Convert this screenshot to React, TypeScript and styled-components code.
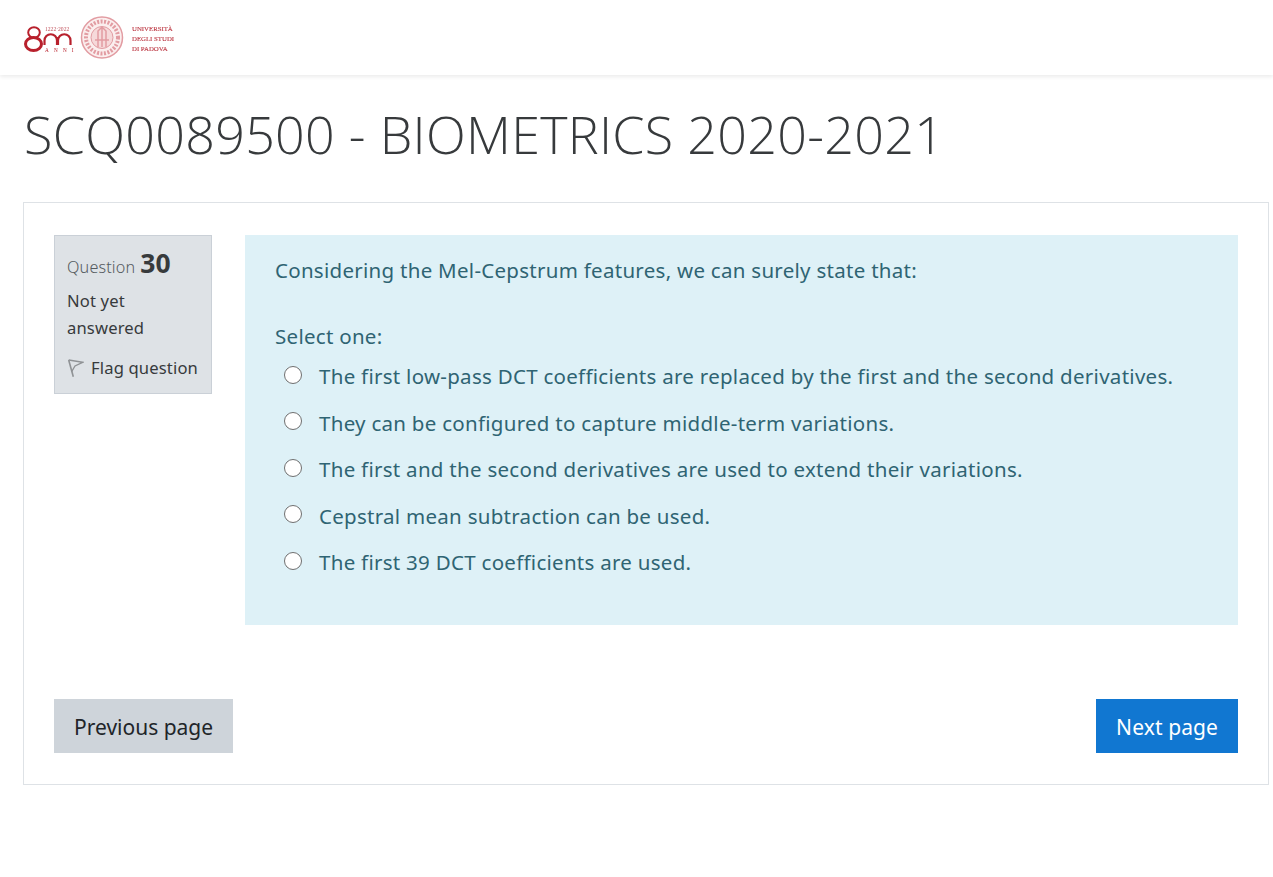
import styled, { createGlobalStyle } from 'styled-components';

const GlobalStyle = createGlobalStyle`
  html, body {
    margin: 0;
    padding: 0;
    background: #fff;
    font-family: 'Noto Sans', 'Open Sans', sans-serif;
    color: #373a3c;
  }
`;

const Header = styled.header`
  height: 75px;
  display: flex;
  align-items: center;
  padding-left: 23px;
  background: #fff;
  box-shadow: 0 2px 4px rgba(0, 0, 0, 0.08);
`;

const LogoSvg = styled.svg`
  filter: blur(0.4px);
`;

const Title = styled.h1`
  margin: 0;
  padding: 24px 0 0 24px;
  height: 103px;
  box-sizing: content-box;
  font-family: 'Open Sans', sans-serif;
  font-weight: 300;
  font-size: 52px;
  letter-spacing: 0.29px;
  line-height: 70px;
  color: #373a3c;
  white-space: nowrap;
`;

const Card = styled.main`
  margin-left: 23px;
  width: 1246px;
  height: 583px;
  box-sizing: border-box;
  border: 1px solid #dee2e6;
  padding: 32px 30px 31px 30px;
  display: flex;
  flex-direction: column;
  justify-content: space-between;
`;

const QuestionRow = styled.div`
  display: flex;
  align-items: flex-start;
  gap: 33px;
`;

const InfoBox = styled.aside`
  width: 158px;
  height: 159px;
  flex: none;
  box-sizing: border-box;
  padding: 12px 12px 0 12px;
  background: #dee2e6;
  border: 1px solid #cad0d7;
  font-size: 16.6px;
  letter-spacing: 0.15px;
  color: #373a3c;
`;

const QuestionNo = styled.div`
  display: flex;
  align-items: baseline;
  gap: 5px;
  height: 39px;
  font-weight: 300;
  color: #555b60;
  font-size: 16.2px;
  line-height: 30px;
`;

const Num = styled.b`
  font-size: 26.5px;
  font-weight: 700;
  color: #373a3c;
`;

const Status = styled.div`
  line-height: 27px;
  height: 54px;
`;

const Flag = styled.div`
  display: flex;
  align-items: center;
  gap: 7px;
  margin-top: 13px;
  line-height: 27px;
  white-space: nowrap;
`;

const Content = styled.section`
  flex: 1;
  height: 390px;
  box-sizing: border-box;
  padding: 20px 30px 0 30px;
  background: #def1f7;
  color: #2f6473;
  font-size: 20.5px;
  letter-spacing: 0.28px;
  line-height: 30px;
`;

const Prompt = styled.div`
  height: 66px;
`;

const Options = styled.div`
  display: flex;
  flex-direction: column;
  gap: 16.5px;
  padding: 10px 0 0 9px;
`;

const Option = styled.label`
  display: flex;
  align-items: center;
  gap: 17px;
`;

const Radio = styled.span`
  width: 18px;
  height: 18px;
  box-sizing: border-box;
  flex: none;
  border: 1.7px solid #6f6f6f;
  border-radius: 50%;
  background: #fff;
  margin-top: -3px;
`;

const ButtonRow = styled.div`
  display: flex;
  justify-content: space-between;
`;

const Button = styled.button<{ $primary?: boolean }>`
  height: 54px;
  padding: 1px 20px 0;
  border: 0;
  font: inherit;
  font-size: 21px;
  letter-spacing: ${(p) => (p.$primary ? '0.1px' : '0')};
  background: ${(p) => (p.$primary ? '#1177d1' : '#ced4da')};
  color: ${(p) => (p.$primary ? '#fff' : '#212529')};
`;

const Logo = () => (
  <LogoSvg width="153" height="44" viewBox="0 0 153 44">
    <g fill="none" stroke="#b8202c">
      <ellipse cx="11" cy="16.5" rx="5.8" ry="5.2" strokeWidth="2" />
      <ellipse cx="10.5" cy="28" rx="8" ry="6.6" strokeWidth="3" />
      <path d="M21.5 29V24.5a6 6 0 0 1 12.5 0v4.500M35 29V24.5a6 6 0 0 1 12.5 0v4.500" strokeWidth="2.2" />
    </g>
    <text x="22" y="15" fontSize="5.6" fill="#c0505a" fontFamily="Liberation Serif">
      1222·2022
    </text>
    <text x="22" y="36" fontSize="5.2" letterSpacing="5.2" fill="#b8202c" fontFamily="Liberation Serif">
      ANNI
    </text>
    <g fill="none" stroke="#e29ca2">
      <circle cx="79" cy="21.5" r="20.5" strokeWidth="1.5" fill="#fbeeee" />
      <circle cx="79" cy="21.5" r="16" strokeWidth="4" strokeDasharray="2 1.5" />
      <circle cx="79" cy="21.5" r="11" strokeWidth="1" fill="#f6d9da" />
      <path d="M75 31V15l4-4 4 4v16M72 24h14M79 11v20" strokeWidth="1.5" />
    </g>
    <g fontFamily="Liberation Serif" fontSize="6.8" fill="#bf3f4a" stroke="#bf3f4a" strokeWidth="0.15">
      <text x="109" y="14.500">UNIVERSITÀ</text>
      <text x="109" y="24.500">DEGLI STUDI</text>
      <text x="109" y="34.500">DI PADOVA</text>
    </g>
  </LogoSvg>
);

const FlagIcon = () => (
  <svg width="17" height="20" viewBox="0 0 17 20" fill="none" stroke="#8f9295" strokeWidth="1.6">
    <path d="M1.7 2 L6.300 18.700" />
    <path d="M1.7 2 L15.700 4.300 L8 8 L4.700 13.700" strokeWidth="1.3" />
  </svg>
);

const options = [
  'The first low-pass DCT coefficients are replaced by the first and the second derivatives.',
  'They can be configured to capture middle-term variations.',
  'The first and the second derivatives are used to extend their variations.',
  'Cepstral mean subtraction can be used.',
  'The first 39 DCT coefficients are used.',
];

const App = () => (
  <>
    <GlobalStyle />
    <Header>
      <Logo />
    </Header>
    <Title>SCQ0089500 - BIOMETRICS 2020-2021</Title>
    <Card>
      <QuestionRow>
        <InfoBox>
          <QuestionNo>
            Question <Num>30</Num>
          </QuestionNo>
          <Status>
            Not yet
            <br />
            answered
          </Status>
          <Flag>
            <FlagIcon />
            Flag question
          </Flag>
        </InfoBox>
        <Content>
          <Prompt>Considering the Mel-Cepstrum features, we can surely state that:</Prompt>
          <div>Select one:</div>
          <Options>
            {options.map((o) => (
              <Option key={o}>
                <Radio />
                {o}
              </Option>
            ))}
          </Options>
        </Content>
      </QuestionRow>
      <ButtonRow>
        <Button>Previous page</Button>
        <Button $primary>Next page</Button>
      </ButtonRow>
    </Card>
  </>
);

export default App;
